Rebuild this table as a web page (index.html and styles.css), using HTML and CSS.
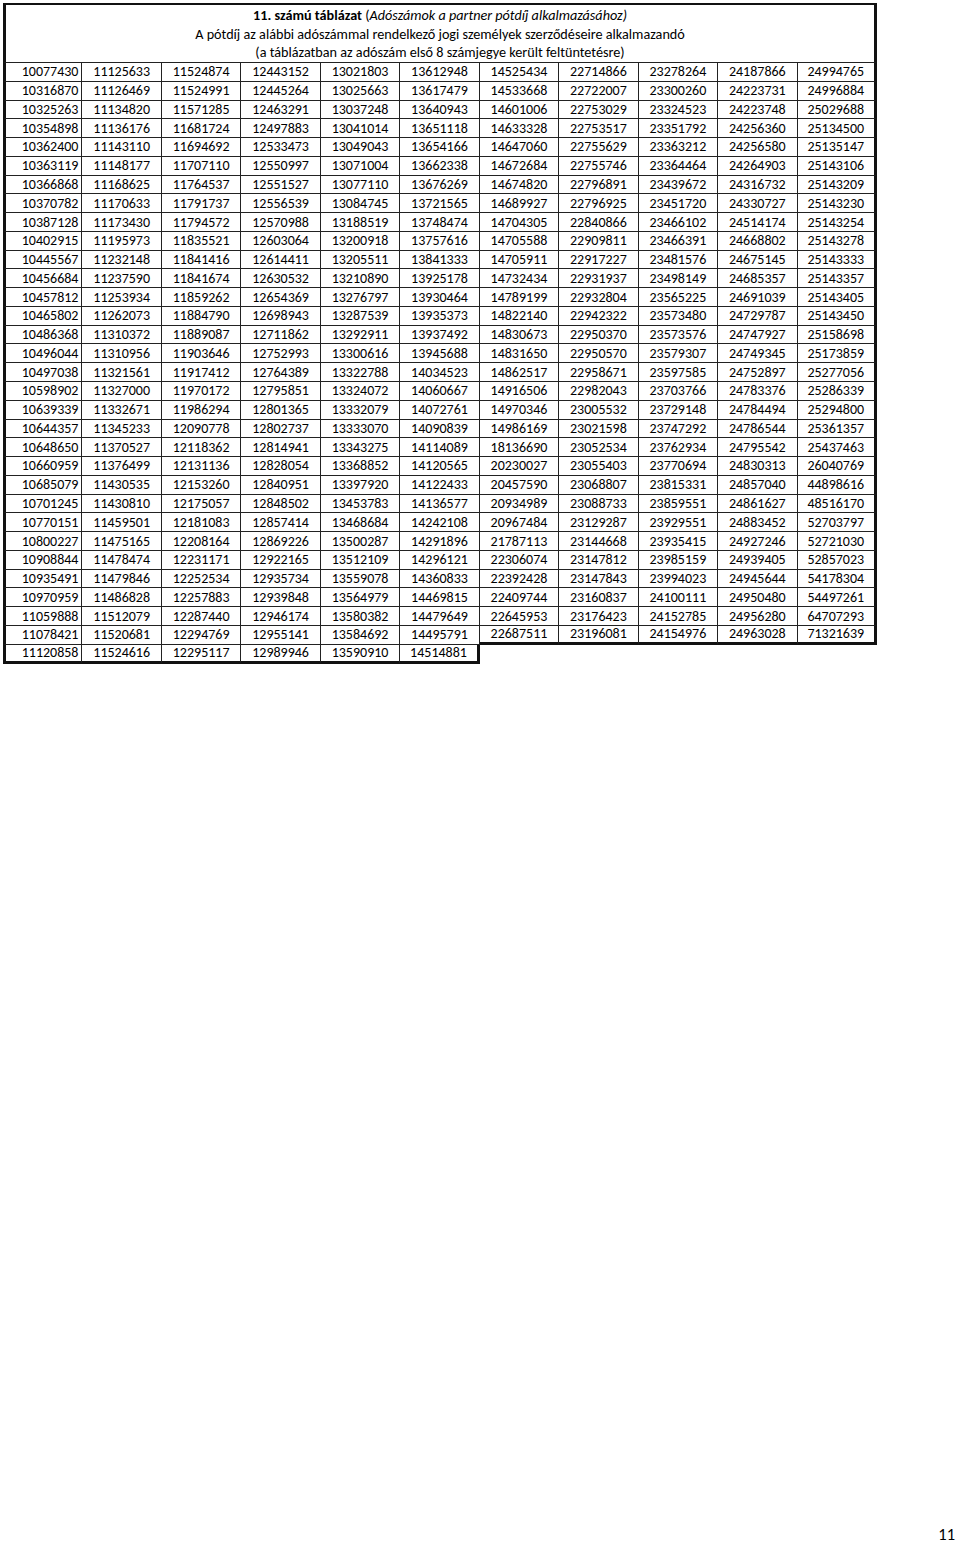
FILE: index.html
```html
<!DOCTYPE html>
<html lang="hu">
<head>
<meta charset="utf-8">
<title>11. számú táblázat</title>
<link rel="stylesheet" href="styles.css">
</head>
<body>
<div class="page">
<table class="grid">
<colgroup><col class="c"><col class="c"><col class="c"><col class="c"><col class="c"><col class="c"><col class="c"><col class="c"><col class="c"><col class="c"><col class="c"></colgroup>
<thead>
<tr><th colspan="11" class="head">
<div class="h1"><b>11. számú táblázat</b> (<i>Adószámok a partner pótdíj alkalmazásához)</i></div>
<div>A pótdíj az alábbi adószámmal rendelkező jogi személyek szerződéseire alkalmazandó</div>
<div>(a táblázatban az adószám első 8 számjegye került feltüntetésre)</div>
</th></tr>
</thead>
<tbody>
<tr><td>10077430</td><td>11125633</td><td>11524874</td><td>12443152</td><td>13021803</td><td>13612948</td><td>14525434</td><td>22714866</td><td>23278264</td><td>24187866</td><td>24994765</td></tr>
<tr><td>10316870</td><td>11126469</td><td>11524991</td><td>12445264</td><td>13025663</td><td>13617479</td><td>14533668</td><td>22722007</td><td>23300260</td><td>24223731</td><td>24996884</td></tr>
<tr><td>10325263</td><td>11134820</td><td>11571285</td><td>12463291</td><td>13037248</td><td>13640943</td><td>14601006</td><td>22753029</td><td>23324523</td><td>24223748</td><td>25029688</td></tr>
<tr><td>10354898</td><td>11136176</td><td>11681724</td><td>12497883</td><td>13041014</td><td>13651118</td><td>14633328</td><td>22753517</td><td>23351792</td><td>24256360</td><td>25134500</td></tr>
<tr><td>10362400</td><td>11143110</td><td>11694692</td><td>12533473</td><td>13049043</td><td>13654166</td><td>14647060</td><td>22755629</td><td>23363212</td><td>24256580</td><td>25135147</td></tr>
<tr><td>10363119</td><td>11148177</td><td>11707110</td><td>12550997</td><td>13071004</td><td>13662338</td><td>14672684</td><td>22755746</td><td>23364464</td><td>24264903</td><td>25143106</td></tr>
<tr><td>10366868</td><td>11168625</td><td>11764537</td><td>12551527</td><td>13077110</td><td>13676269</td><td>14674820</td><td>22796891</td><td>23439672</td><td>24316732</td><td>25143209</td></tr>
<tr><td>10370782</td><td>11170633</td><td>11791737</td><td>12556539</td><td>13084745</td><td>13721565</td><td>14689927</td><td>22796925</td><td>23451720</td><td>24330727</td><td>25143230</td></tr>
<tr><td>10387128</td><td>11173430</td><td>11794572</td><td>12570988</td><td>13188519</td><td>13748474</td><td>14704305</td><td>22840866</td><td>23466102</td><td>24514174</td><td>25143254</td></tr>
<tr><td>10402915</td><td>11195973</td><td>11835521</td><td>12603064</td><td>13200918</td><td>13757616</td><td>14705588</td><td>22909811</td><td>23466391</td><td>24668802</td><td>25143278</td></tr>
<tr><td>10445567</td><td>11232148</td><td>11841416</td><td>12614411</td><td>13205511</td><td>13841333</td><td>14705911</td><td>22917227</td><td>23481576</td><td>24675145</td><td>25143333</td></tr>
<tr><td>10456684</td><td>11237590</td><td>11841674</td><td>12630532</td><td>13210890</td><td>13925178</td><td>14732434</td><td>22931937</td><td>23498149</td><td>24685357</td><td>25143357</td></tr>
<tr><td>10457812</td><td>11253934</td><td>11859262</td><td>12654369</td><td>13276797</td><td>13930464</td><td>14789199</td><td>22932804</td><td>23565225</td><td>24691039</td><td>25143405</td></tr>
<tr><td>10465802</td><td>11262073</td><td>11884790</td><td>12698943</td><td>13287539</td><td>13935373</td><td>14822140</td><td>22942322</td><td>23573480</td><td>24729787</td><td>25143450</td></tr>
<tr><td>10486368</td><td>11310372</td><td>11889087</td><td>12711862</td><td>13292911</td><td>13937492</td><td>14830673</td><td>22950370</td><td>23573576</td><td>24747927</td><td>25158698</td></tr>
<tr><td>10496044</td><td>11310956</td><td>11903646</td><td>12752993</td><td>13300616</td><td>13945688</td><td>14831650</td><td>22950570</td><td>23579307</td><td>24749345</td><td>25173859</td></tr>
<tr><td>10497038</td><td>11321561</td><td>11917412</td><td>12764389</td><td>13322788</td><td>14034523</td><td>14862517</td><td>22958671</td><td>23597585</td><td>24752897</td><td>25277056</td></tr>
<tr><td>10598902</td><td>11327000</td><td>11970172</td><td>12795851</td><td>13324072</td><td>14060667</td><td>14916506</td><td>22982043</td><td>23703766</td><td>24783376</td><td>25286339</td></tr>
<tr><td>10639339</td><td>11332671</td><td>11986294</td><td>12801365</td><td>13332079</td><td>14072761</td><td>14970346</td><td>23005532</td><td>23729148</td><td>24784494</td><td>25294800</td></tr>
<tr><td>10644357</td><td>11345233</td><td>12090778</td><td>12802737</td><td>13333070</td><td>14090839</td><td>14986169</td><td>23021598</td><td>23747292</td><td>24786544</td><td>25361357</td></tr>
<tr><td>10648650</td><td>11370527</td><td>12118362</td><td>12814941</td><td>13343275</td><td>14114089</td><td>18136690</td><td>23052534</td><td>23762934</td><td>24795542</td><td>25437463</td></tr>
<tr><td>10660959</td><td>11376499</td><td>12131136</td><td>12828054</td><td>13368852</td><td>14120565</td><td>20230027</td><td>23055403</td><td>23770694</td><td>24830313</td><td>26040769</td></tr>
<tr><td>10685079</td><td>11430535</td><td>12153260</td><td>12840951</td><td>13397920</td><td>14122433</td><td>20457590</td><td>23068807</td><td>23815331</td><td>24857040</td><td>44898616</td></tr>
<tr><td>10701245</td><td>11430810</td><td>12175057</td><td>12848502</td><td>13453783</td><td>14136577</td><td>20934989</td><td>23088733</td><td>23859551</td><td>24861627</td><td>48516170</td></tr>
<tr><td>10770151</td><td>11459501</td><td>12181083</td><td>12857414</td><td>13468684</td><td>14242108</td><td>20967484</td><td>23129287</td><td>23929551</td><td>24883452</td><td>52703797</td></tr>
<tr><td>10800227</td><td>11475165</td><td>12208164</td><td>12869226</td><td>13500287</td><td>14291896</td><td>21787113</td><td>23144668</td><td>23935415</td><td>24927246</td><td>52721030</td></tr>
<tr><td>10908844</td><td>11478474</td><td>12231171</td><td>12922165</td><td>13512109</td><td>14296121</td><td>22306074</td><td>23147812</td><td>23985159</td><td>24939405</td><td>52857023</td></tr>
<tr><td>10935491</td><td>11479846</td><td>12252534</td><td>12935734</td><td>13559078</td><td>14360833</td><td>22392428</td><td>23147843</td><td>23994023</td><td>24945644</td><td>54178304</td></tr>
<tr><td>10970959</td><td>11486828</td><td>12257883</td><td>12939848</td><td>13564979</td><td>14469815</td><td>22409744</td><td>23160837</td><td>24100111</td><td>24950480</td><td>54497261</td></tr>
<tr><td>11059888</td><td>11512079</td><td>12287440</td><td>12946174</td><td>13580382</td><td>14479649</td><td>22645953</td><td>23176423</td><td>24152785</td><td>24956280</td><td>64707293</td></tr>
<tr><td>11078421</td><td>11520681</td><td>12294769</td><td>12955141</td><td>13584692</td><td>14495791</td><td class="edge-b">22687511</td><td class="edge-b">23196081</td><td class="edge-b">24154976</td><td class="edge-b">24963028</td><td class="edge-b">71321639</td></tr>
<tr class="last"><td>11120858</td><td>11524616</td><td>12295117</td><td>12989946</td><td>13590910</td><td class="edge-r">14514881</td></tr>
</tbody>
</table>
<div class="pageno">11</div>
</div>
</body>
</html>
```

FILE: styles.css
```css
html, body {
  margin: 0;
  padding: 0;
  background: #fff;
}

.page {
  box-sizing: border-box;
  width: 960px;
  height: 1545px;
  padding: 3px 0 0 3px;
  display: flex;
  flex-direction: column;
  font-family: "Carlito", Lato, "Liberation Sans", sans-serif;
  color: #000;
}

.grid {
  border-collapse: separate;
  border-spacing: 0;
  table-layout: fixed;
  width: 874px;
}

.grid td,
.grid th {
  box-sizing: border-box;
  border-right: 1px solid #222;
  border-bottom: 1px solid #222;
  padding: 0;
  font-weight: normal;
}

.grid td {
  height: 18.78px;
  font-size: 14px;
  line-height: 15px;
  text-align: center;
  vertical-align: middle;
}

.grid td:first-child {
  border-left: 3px solid #111;
  text-align: right;
  padding-right: 3px;
}

.grid td:last-child {
  border-right: 3px solid #111;
}

.grid tr.last td {
  border-bottom: 3px solid #111;
}

.grid td.edge-r {
  border-right: 3px solid #111;
}

.grid td.edge-b {
  border-bottom: 3px solid #111;
}

.grid th.head {
  height: 60px;
  border-top: 2px solid #111;
  border-left: 3px solid #111;
  border-right: 3px solid #111;
  font-size: 14.2px;
  line-height: 18.6px;
  text-align: center;
  vertical-align: middle;
  padding-top: 1px;
}

.head b {
  font-weight: bold;
}

.head i {
  font-style: italic;
}

.pageno {
  margin-top: auto;
  align-self: flex-end;
  margin-right: 5px;
  margin-bottom: 2px;
  font-size: 16.5px;
  line-height: 17px;
}
```
